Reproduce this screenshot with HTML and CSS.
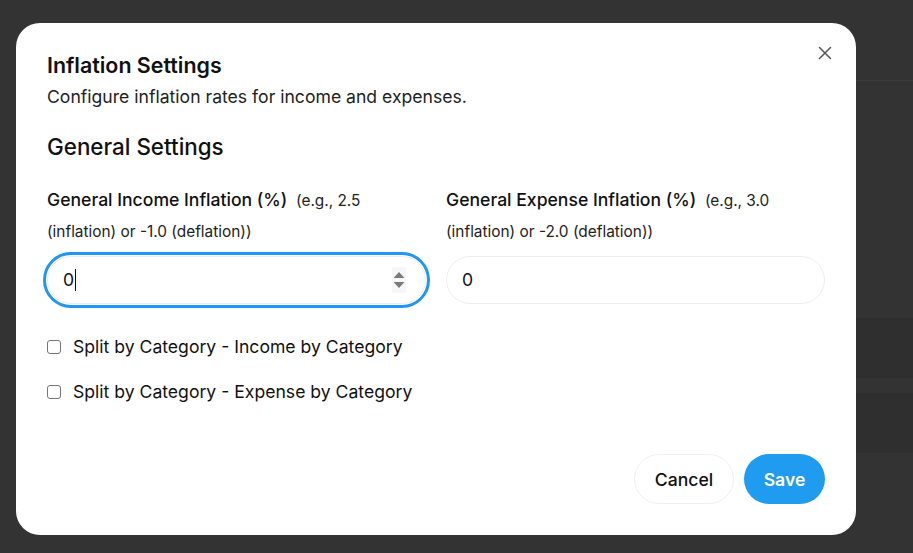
FILE: index.html
```html
<!DOCTYPE html>
<html lang="en">
<head>
<meta charset="utf-8">
<title>Inflation Settings</title>
<link rel="stylesheet" href="styles.css">
</head>
<body>
<div class="backdrop">
  <div class="band band-a"></div>
  <div class="band band-b"></div>
  <div class="band band-c"></div>
  <div class="modal">
    <button class="close" aria-label="Close">
      <svg width="14" height="14" viewBox="0 0 14 14"><path d="M1.5 1.5L12.5 12.5M12.5 1.5L1.5 12.5" stroke="#555" stroke-width="1.5" stroke-linecap="round"/></svg>
    </button>
    <h1 class="title">Inflation Settings</h1>
    <p class="desc">Configure inflation rates for income and expenses.</p>
    <h2 class="section">General Settings</h2>
    <div class="fields">
      <div class="field">
        <label class="label">General Income Inflation (%) <span class="hint">(e.g., 2.5 (inflation) or -1.0 (deflation))</span></label>
        <div class="input focused">
          <span class="value">0</span><span class="caret"></span>
          <svg class="spin" width="14" height="26" viewBox="0 0 14 26"><rect x="0" y="0" width="14" height="26" fill="#f7f7f7"/><path d="M7 5L12.5 11H1.5Z" fill="#7a7a7a"/><path d="M7 21L12.5 15H1.5Z" fill="#7a7a7a"/></svg>
        </div>
      </div>
      <div class="field">
        <label class="label">General Expense Inflation (%) <span class="hint">(e.g., 3.0 (inflation) or -2.0 (deflation))</span></label>
        <div class="input">
          <span class="value">0</span>
        </div>
      </div>
    </div>
    <div class="checks">
      <label class="check"><span class="box"></span>Split by Category - Income by Category</label>
      <label class="check"><span class="box"></span>Split by Category - Expense by Category</label>
    </div>
    <div class="actions">
      <button class="btn cancel">Cancel</button>
      <button class="btn save">Save</button>
    </div>
  </div>
</div>
</body>
</html>
```

FILE: styles.css
```css
* { box-sizing: border-box; }
html, body { margin: 0; padding: 0; }
body {
  width: 913px;
  height: 553px;
  overflow: hidden;
  background: #323332;
  font-family: Inter, "Noto Sans", sans-serif;
  color: #111;
}
.backdrop {
  position: relative;
  width: 913px;
  height: 553px;
  padding: 23px 0 0 16px;
}
.band {
  position: absolute;
  left: 856px;
  right: 0;
}
.band-a { top: 80px; height: 1px; background: #3a3b3a; }
.band-b { top: 318px; height: 60px; background: #2e2f2e; }
.band-c { top: 393px; height: 60px; background: #2e2f2e; }
.modal {
  position: relative;
  width: 840px;
  height: 512px;
  background: #fff;
  border-radius: 24px;
  padding: 27px 31px 31px 31px;
  display: flex;
  flex-direction: column;
}
.close {
  position: absolute;
  top: 22px;
  right: 23px;
  width: 16px;
  height: 16px;
  padding: 0;
  border: 0;
  background: none;
  display: flex;
  align-items: center;
  justify-content: center;
}
.title {
  margin: 0;
  font-size: 21.4px;
  line-height: 30px;
  font-weight: 600;
}
.desc {
  margin: 4px 0 0 0;
  font-size: 17.6px;
  line-height: 26px;
  color: #222;
}
.section {
  margin: 22px 0 0 0;
  font-size: 22.4px;
  line-height: 30px;
  font-weight: 500;
}
.fields {
  display: grid;
  grid-template-columns: 1fr 1fr;
  column-gap: 20px;
  margin-top: 23px;
}
.field {
  display: flex;
  flex-direction: column;
}
.label {
  font-size: 17.6px;
  line-height: 30px;
  font-weight: 500;
  color: #111;
}
.hint {
  font-size: 15.4px;
  font-weight: 400;
  color: #222;
  margin-left: 4px;
}
.input {
  margin-top: 9px;
  height: 48px;
  border: 1px solid #eeeeee;
  border-radius: 24px;
  padding: 0 19px 0 15px;
  display: flex;
  align-items: center;
  font-size: 17.6px;
  color: #111;
}
.input.focused {
  outline: 3px solid #2196f3;
  outline-offset: 1px;
}
.value { line-height: 22px; }
.caret {
  width: 1px;
  height: 22px;
  background: #111;
  margin-left: 1px;
}
.spin { margin-left: auto; }
.checks {
  margin-top: 30px;
  display: flex;
  flex-direction: column;
  gap: 19px;
}
.check {
  display: flex;
  align-items: center;
  font-size: 17.6px;
  line-height: 26px;
  font-weight: 400;
  color: #111;
}
.box {
  width: 14px;
  height: 14px;
  border: 1px solid #767676;
  border-radius: 3px;
  margin: 0 12px 0 0;
  background: #fff;
}
.actions {
  margin-top: auto;
  display: flex;
  justify-content: flex-end;
  gap: 10px;
}
.btn {
  height: 50px;
  border-radius: 25px;
  font-family: Inter, "Noto Sans", sans-serif;
  font-size: 17.6px;
  padding: 0;
}
.cancel {
  width: 100px;
  background: #fff;
  border: 1px solid #f0f0f0;
  color: #111;
  font-weight: 500;
}
.save {
  width: 81px;
  background: #1f9cf0;
  border: 0;
  color: #fff;
  font-weight: 600;
}
```
